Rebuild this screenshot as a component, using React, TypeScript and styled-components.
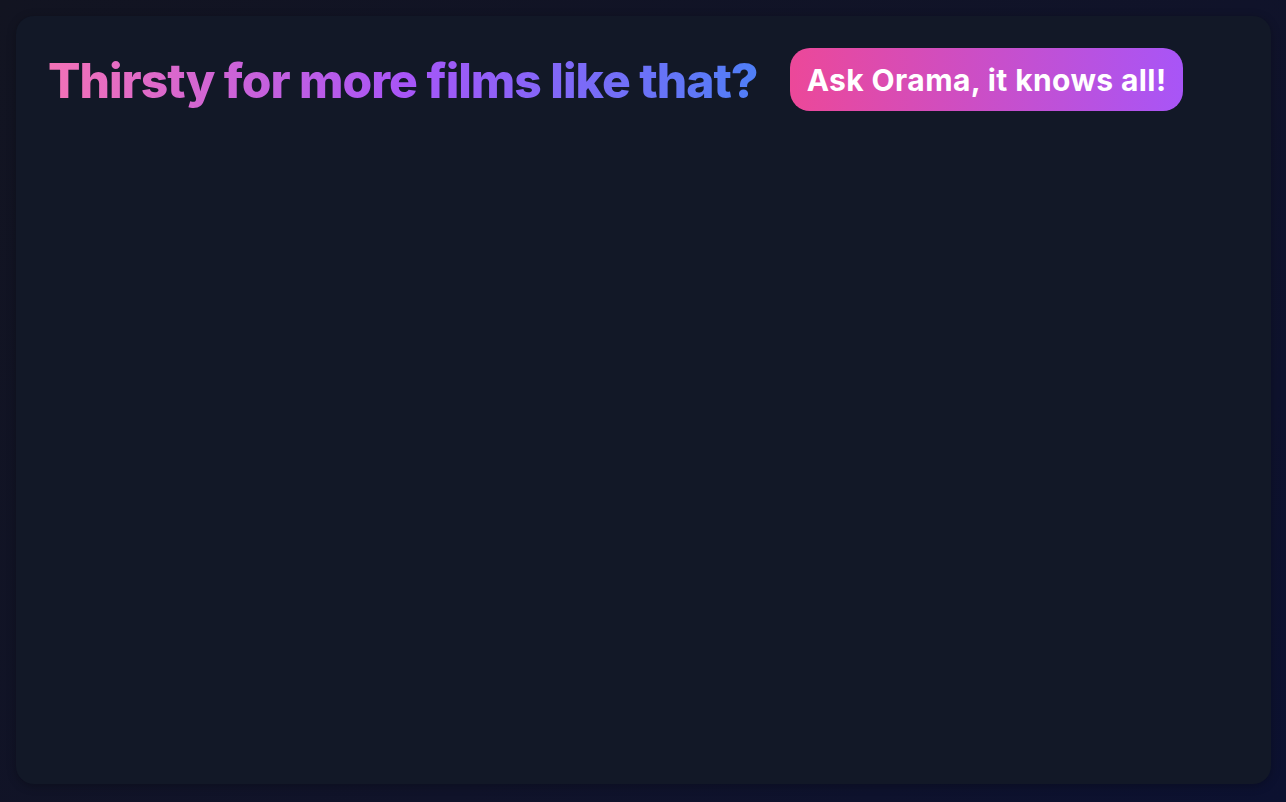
import React from "react";
import styled, { createGlobalStyle } from "styled-components";

const GlobalStyle = createGlobalStyle`
  html, body { margin: 0; padding: 0; }
  body {
    min-height: 100vh;
    background: linear-gradient(135deg, #121421 0%, #10132a 60%, #0c1130 100%);
    font-family: Inter, "Noto Sans", "Liberation Sans", sans-serif;
  }
`;

const Page = styled.div`
  box-sizing: border-box;
  height: 802px;
  padding: 16px 15px 18px 16px;
  display: flex;
`;

const Card = styled.section`
  flex: 1;
  box-sizing: border-box;
  background: #121827;
  border-radius: 18px;
  padding: 32px;
  box-shadow: 0 2px 10px rgba(0, 0, 0, 0.25);
`;

const Header = styled.header`
  display: flex;
  align-items: center;
  gap: 32px;
`;

const Title = styled.h1`
  margin: 0;
  font-size: 48px;
  font-weight: 800;
  line-height: 1.2;
  letter-spacing: -1px;
  background: linear-gradient(90deg, #f472b6 0%, #a855f7 50%, #4f7ff7 100%);
  -webkit-background-clip: text;
  background-clip: text;
  color: transparent;
  padding-top: 2px;
`;

const AskButton = styled.button`
  border: none;
  cursor: pointer;
  height: 63px;
  padding: 0 17px 0 17px;
  border-radius: 20px;
  background: linear-gradient(90deg, #ec4899 0%, #a855f7 100%);
  color: #ffffff;
  font-family: Inter, "Noto Sans", "Liberation Sans", sans-serif;
  font-size: 30px;
  font-weight: 700;
  letter-spacing: 0.4px;
`;

export default function App() {
  return (
    <>
      <GlobalStyle />
      <Page>
        <Card>
          <Header>
            <Title>Thirsty for more films like that?</Title>
            <AskButton>Ask Orama, it knows all!</AskButton>
          </Header>
        </Card>
      </Page>
    </>
  );
}
